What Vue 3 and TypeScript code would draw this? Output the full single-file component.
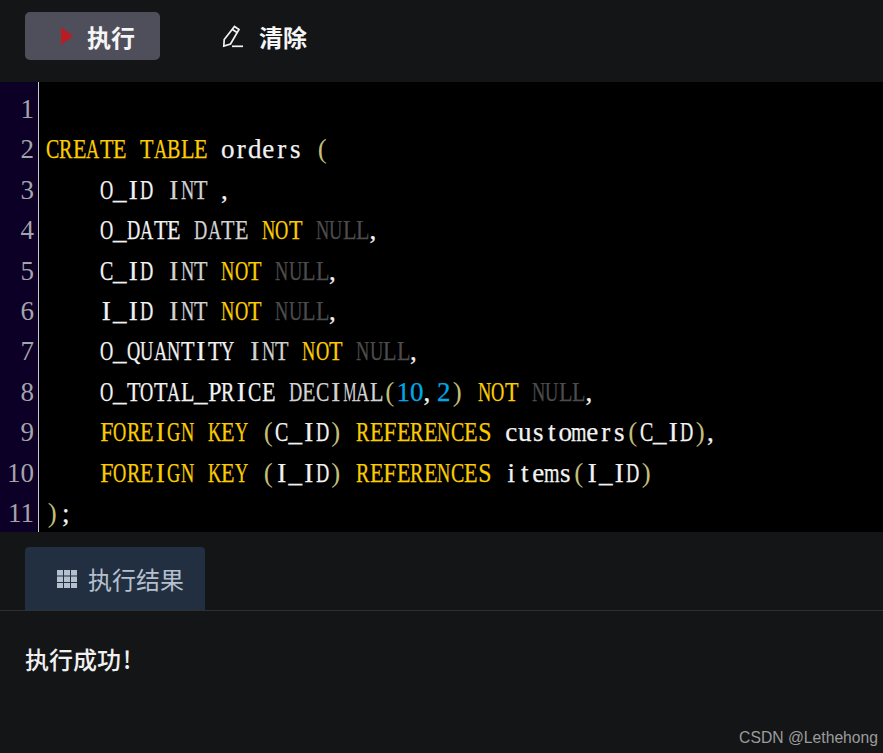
<script setup lang="ts">
type Tok = [string, string?]
const k = 'kw', t = 'ty', n = 'nu', p = 'pa', d = 'di', i = 'id'
const lines: Tok[][] = [
  [],
  [['CREATE TABLE', k], [' orders ', i], ['(', p]],
  [['    O_ID ', i], ['INT', t], [' ,', i]],
  [['    O_DATE ', i], ['DATE', t], [' ', i], ['NOT', k], [' ', i], ['NULL', n], [',', i]],
  [['    C_ID ', i], ['INT', t], [' ', i], ['NOT', k], [' ', i], ['NULL', n], [',', i]],
  [['    I_ID ', i], ['INT', t], [' ', i], ['NOT', k], [' ', i], ['NULL', n], [',', i]],
  [['    O_QUANTITY ', i], ['INT', t], [' ', i], ['NOT', k], [' ', i], ['NULL', n], [',', i]],
  [['    O_TOTAL_PRICE ', i], ['DECIMAL', t], ['(', p], ['10', d], [',', i], ['2', d], [')', p], [' ', i], ['NOT', k], [' ', i], ['NULL', n], [',', i]],
  [['    ', i], ['FOREIGN KEY', k], [' ', i], ['(', p], ['C_ID', i], [')', p], [' ', i], ['REFERENCES', k], [' customers', i], ['(', p], ['C_ID', i], [')', p], [',', i]],
  [['    ', i], ['FOREIGN KEY', k], [' ', i], ['(', p], ['I_ID', i], [')', p], [' ', i], ['REFERENCES', k], [' items', i], ['(', p], ['I_ID', i], [')', p]],
  [[')', p], [';', i]],
]
// The serif face is proportional: every glyph gets a fixed-width cell, wide ones are narrowed to fit.
const cellClass = (c: string) => {
  if (c === 'M') return 'cell fit-m'
  if (/[ADGHKNOQUVY]/.test(c)) return 'cell fit-xl'
  if (/[BCR]/.test(c)) return 'cell fit-l'
  if (/[ELT]/.test(c)) return 'cell fit-n'
  if (/[FPS]/.test(c)) return 'cell fit-s'
  if (c === 'm') return 'cell fit-l'
  if (c === ',') return 'cell lead'
  return 'cell'
}
</script>

<template>
  <div class="page">
    <header class="toolbar">
      <button class="btn run">
        <svg class="ico-play" width="12" height="18" viewBox="0 0 12 18"><path d="M0 0 L12 9 L0 18 Z" fill="#bb1c24" /></svg>
        <span>执行</span>
      </button>
      <button class="btn clear">
        <svg class="ico-pen" width="22" height="24" viewBox="0 0 22 24" fill="none" stroke="#f2f2f2" stroke-width="1.7">
          <path d="M12.5 2.5 L17 5.5 L8.5 20 L1.8 22 L2.2 15.5 Z" />
          <path d="M10.5 5.5 L15 8.5" />
          <path d="M10 22.3 H21" />
        </svg>
        <span>清除</span>
      </button>
    </header>

    <section class="editor">
      <div v-for="(line, idx) in lines" :key="idx" class="line">
        <span class="num">{{ idx + 1 }}</span>
        <code class="code"><span v-for="(tok, j) in line" :key="j" :class="tok[1]"><span v-for="(c, m) in tok[0]" :key="m" :class="cellClass(c)">{{ c }}</span></span></code>
      </div>
    </section>

    <nav class="tabs">
      <div class="tab">
        <svg width="20" height="18" viewBox="0 0 20 18" fill="#b5c0ce">
          <rect v-for="c in 9" :key="c" :x="((c - 1) % 3) * 7" :y="Math.floor((c - 1) / 3) * 6.5" width="6" height="5.5" />
        </svg>
        <span>执行结果</span>
      </div>
    </nav>

    <main class="result">执行成功<span class="bang">!</span></main>
    <footer class="mark">CSDN @Lethehong</footer>
  </div>
</template>

<style scoped>
.page {
  width: 883px;
  height: 753px;
  background: #141517;
  overflow: hidden;
  display: flex;
  flex-direction: column;
  font-family: "Noto Sans CJK SC", "Noto Sans", sans-serif;
}
.toolbar {
  height: 82px;
  flex: none;
  padding: 12px 0 0 25px;
  box-sizing: border-box;
  display: flex;
  align-items: flex-start;
}
.btn {
  height: 48px;
  border: 0;
  border-radius: 5px;
  background: transparent;
  color: #f5f5f5;
  font: 700 24px "Noto Sans CJK SC", sans-serif;
  display: flex;
  align-items: center;
  padding: 0;
}
.run {
  width: 135px;
  background: #4f4f5c;
  padding-left: 36px;
}
.ico-play { margin-right: 14px; }
.clear {
  margin-left: 62px;
}
.ico-pen { margin-right: 15px; }
.editor {
  height: 450px;
  flex: none;
  box-sizing: border-box;
  padding-top: 7px;
  overflow: hidden;
  background: linear-gradient(to right, #0d0026 38px, #c8c8d0 38px, #c8c8d0 39px, #000 39px);
  font: 27px/40.4px "Liberation Serif", serif;
}
.line {
  display: flex;
  height: 40.4px;
  white-space: pre;
}
.num {
  width: 34px;
  flex: none;
  text-align: right;
  color: #a4a4ac;
}
.code {
  font: inherit;
  margin-left: 11.5px;
  -webkit-text-stroke: 0.25px currentColor;
}
.cell {
  display: inline-flex;
  justify-content: center;
  width: 13.5px;
}
.lead { justify-content: flex-start; }
.fit-xl { transform: scaleX(0.68); }
.fit-l { transform: scaleX(0.74); }
.fit-n { transform: scaleX(0.82); }
.fit-s { transform: scaleX(0.88); }
.fit-m { transform: scaleX(0.55); }
.kw { color: #fbcd00; }
.ty { color: #d2d2d2; }
.nu { color: #4c4c4c; }
.pa { color: #c0be78; -webkit-text-stroke: 0; }
.di { color: #00a8e4; }
.id { color: #f2f2f2; }
.tabs {
  height: 79px;
  flex: none;
  box-sizing: border-box;
  padding: 15px 0 0 25px;
  border-bottom: 1px solid #2e3033;
}
.tab {
  width: 180px;
  height: 63px;
  box-sizing: border-box;
  padding-left: 32px;
  background: #212f40;
  border-radius: 4px 4px 0 0;
  color: #b5c0ce;
  font-size: 24px;
  display: flex;
  align-items: center;
  gap: 11px;
}
.result {
  padding: 30px 0 0 25px;
  font-size: 24px;
  font-weight: 500;
  line-height: 36px;
  color: #f0f0f0;
}
.bang { margin-left: 2px; }
.mark {
  position: absolute;
  right: 5px;
  top: 727px;
  font: 15.7px/22px "Liberation Sans", sans-serif;
  color: #9c9c9c;
}
</style>
